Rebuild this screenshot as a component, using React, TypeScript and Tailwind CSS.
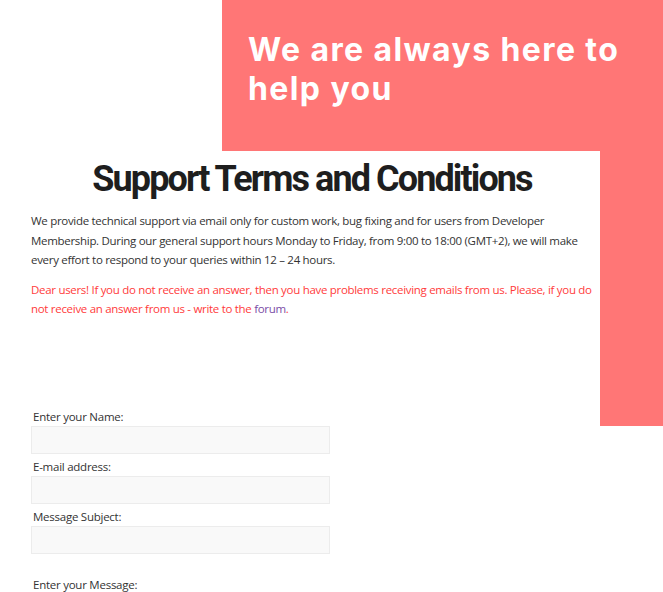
import React from "react";

const body = { fontFamily: '"Open Sans", "Liberation Sans", sans-serif' };

function Field({ label, className = "" }: { label: string; className?: string }) {
  return (
    <div className={className}>
      <label className="block pl-[2px] text-[11.5px] leading-[17px] tracking-[-0.25px] text-[#333]" style={body}>
        {label}
      </label>
      <input
        type="text"
        className="mt-[1px] block h-[28px] w-[299px] border border-[#ececec] bg-[#f9f9f9] outline-none"
      />
    </div>
  );
}

export default function App() {
  return (
    <div className="min-h-[592px] w-[663px] overflow-hidden bg-white">
      {/* coral banner */}
      <section className="ml-[222px] h-[426px] bg-[#ff7676] pl-[26px] pt-[30px]">
        <h2
          className="text-[32px] font-bold leading-[39px] tracking-[1.4px] text-white"
          style={{ fontFamily: '"Inter", "Open Sans", sans-serif' }}
        >
          We are always here to
          <br />
          help you
        </h2>
      </section>

      {/* white card overlapping the banner */}
      <main className="relative -mt-[275px] w-[600px] bg-white pb-[40px] pl-[31px] pt-[6px]">
        <h1
          className="mr-[7px] text-center text-[36px] font-bold leading-[44px] tracking-[-1.9px] text-[#1e1e1e]"
          style={{ fontFamily: 'Roboto, "Liberation Sans", sans-serif' }}
        >
          Support Terms and Conditions
        </h1>
        <p className="mt-[10px] text-[11.5px] leading-[19.5px] tracking-[-0.3px] text-[#333]" style={body}>
          We provide technical support via email only for custom work, bug fixing and for users from Developer
          Membership. During our general support hours Monday to Friday, from 9:00 to 18:00 (GMT+2), we will make
          every effort to respond to your queries within 12 – 24 hours.
        </p>
        <p className="mt-[10px] text-[11.5px] leading-[19.5px] tracking-[-0.3px] text-[#ff3b3b]" style={body}>
          Dear users! If you do not receive an answer, then you have problems receiving emails from us. Please, if you do
          not receive an answer from us - write to the <a className="text-[#7a4ca6]">forum</a>.
        </p>

        <form className="mt-[89px]">
          <Field label="Enter your Name:" />
          <Field label="E-mail address:" className="mt-[4px]" />
          <Field label="Message Subject:" className="mt-[4px]" />
          <label
            className="mt-[22px] block pl-[2px] text-[11.5px] leading-[17px] tracking-[-0.25px] text-[#333]"
            style={body}
          >
            Enter your Message:
          </label>
        </form>
      </main>
    </div>
  );
}
